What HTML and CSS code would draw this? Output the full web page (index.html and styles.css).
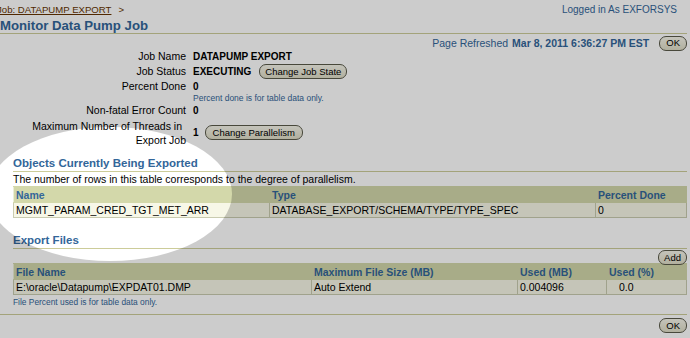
FILE: index.html
```html
<!DOCTYPE html>
<html lang="en">
<head>
  <meta charset="UTF-8">
  <title>Monitor Data Pump Job</title>
  <link rel="stylesheet" href="styles.css">
</head>
<body>
  <div class="page">
    <!-- Top bar -->
    <div class="top-bar">
      <div class="breadcrumb"><a href="#">Job: DATAPUMP EXPORT</a><span class="crumb-sep">&gt;</span></div>
      <div class="login">Logged in As EXFORSYS</div>
    </div>
    <h1 class="page-title">Monitor Data Pump Job</h1>

    <div class="refresh-row">
      <span class="refresh-label">Page Refreshed</span>
      <span class="refresh-time">Mar 8, 2011 6:36:27 PM EST</span>
      <button class="btn">OK</button>
    </div>

    <!-- Job details -->
    <div class="details">
      <div class="label">Job Name</div>
      <div class="value">DATAPUMP EXPORT</div>

      <div class="label">Job Status</div>
      <div class="value">EXECUTING <button class="btn">Change Job State</button></div>

      <div class="label">Percent Done</div>
      <div class="value">0</div>

      <div class="label"></div>
      <div class="note">Percent done is for table data only.</div>

      <div class="label">Non-fatal Error Count</div>
      <div class="value">0</div>

      <div class="label label-wrap"><span class="wrap-line">Maximum Number of Threads in</span><br>Export Job</div>
      <div class="value value-mid">1 <button class="btn">Change Parallelism</button></div>
    </div>

    <!-- Objects section -->
    <div class="section">
      <h2 class="section-title">Objects Currently Being Exported</h2>
      <p class="section-text">The number of rows in this table corresponds to the degree of parallelism.</p>
      <table class="data-table">
        <colgroup>
          <col style="width: 256px">
          <col style="width: 326px">
          <col>
        </colgroup>
        <tr>
          <th>Name</th>
          <th>Type</th>
          <th>Percent Done</th>
        </tr>
        <tr>
          <td>MGMT_PARAM_CRED_TGT_MET_ARR</td>
          <td>DATABASE_EXPORT/SCHEMA/TYPE/TYPE_SPEC</td>
          <td>0</td>
        </tr>
      </table>
    </div>

    <!-- Export files section -->
    <div class="section">
      <h2 class="section-title">Export Files</h2>
      <div class="table-actions"><button class="btn">Add</button></div>
      <table class="data-table">
        <colgroup>
          <col style="width: 298px">
          <col style="width: 206px">
          <col style="width: 89px">
          <col>
        </colgroup>
        <tr>
          <th>File Name</th>
          <th>Maximum File Size (MB)</th>
          <th>Used (MB)</th>
          <th>Used (%)</th>
        </tr>
        <tr>
          <td>E:\oracle\Datapump\EXPDAT01.DMP</td>
          <td>Auto Extend</td>
          <td>0.004096</td>
          <td class="num">0.0</td>
        </tr>
      </table>
      <div class="note table-note">File Percent used is for table data only.</div>
    </div>

    <div class="footer">
      <button class="btn">OK</button>
    </div>
  </div>

  <!-- Spotlight highlight over the page -->
  <div class="spotlight"></div>
</body>
</html>
```

FILE: styles.css
```css
:root {
  --blaf-blue: #336699;
  --link-brown: #663300;
  --rule: #cccc99;
  --head-bg: #d3d8aa;
  --row-bg: #f7f7e7;
  --cell-border: #c9cbb0;
}

body {
  margin: 0;
  background: #ffffff;
  font-family: "Liberation Sans", Arial, sans-serif;
  font-size: 10.5px;
  color: #000;
  overflow: hidden;
  position: relative;
  height: 338px;
}

.page {
  margin-left: -2px;
  padding-right: 3px;
}

/* Top bar */
.top-bar {
  display: flex;
  justify-content: space-between;
  align-items: center;
  height: 16px;
  padding-top: 1px;
}

.breadcrumb {
  font-size: 9.6px;
  color: var(--link-brown);
  margin-left: -1px;
}

.breadcrumb a {
  color: var(--link-brown);
}

.crumb-sep {
  margin-left: 7px;
}

.login {
  color: var(--blaf-blue);
  font-size: 10px;
  padding-right: 10px;
}

.page-title {
  margin: 1px 0 0 2px;
  font-size: 13.2px;
  color: var(--blaf-blue);
  line-height: 15px;
  border-bottom: 1px solid var(--rule);
}

.refresh-row {
  display: flex;
  justify-content: flex-end;
  align-items: center;
  gap: 4px;
  height: 16px;
  margin-top: 1px;
  color: var(--blaf-blue);
}

.refresh-time {
  font-weight: bold;
  margin-right: 6px;
}

/* Buttons */
.btn {
  font-family: "Liberation Sans", Arial, sans-serif;
  font-size: 9.5px;
  line-height: 12px;
  height: 15px;
  padding: 0 5px;
  border: 1px solid #5a5a4a;
  border-radius: 7px;
  background: linear-gradient(#f6f5ea, #dedcc6);
  color: #000;
  vertical-align: middle;
  cursor: pointer;
}

.refresh-row .btn,
.footer .btn {
  padding: 0 6px;
}

/* Details */
.details {
  display: grid;
  grid-template-columns: 188px auto;
  column-gap: 7px;
  line-height: 15px;
  margin-top: -2px;
}

.label {
  text-align: right;
}

.label-wrap {
  line-height: 14px;
  margin-top: 1px;
}

.wrap-line {
  padding-right: 4px;
}

.value {
  font-size: 10px;
  font-weight: bold;
  display: flex;
  align-items: center;
  gap: 6px;
}

.value .btn {
  font-weight: normal;
  margin-left: 2px;
}

.value-mid {
  align-self: center;
  gap: 4px;
}

.value-mid .btn {
  padding: 0 7px;
}

.note {
  font-size: 8.5px;
  color: var(--blaf-blue);
  line-height: 9px;
}

/* Sections */
.section {
  margin-left: 15px;
}

.section-title {
  margin: 0;
  font-size: 11.5px;
  color: var(--blaf-blue);
  line-height: 16px;
  border-bottom: 1px solid var(--rule);
}

.details + .section {
  margin-top: 8px;
}

.section + .section {
  margin-top: 14px;
}

.section-text {
  margin: 1px 0 0;
  font-size: 10.5px;
  line-height: 13px;
}

.table-actions {
  display: flex;
  justify-content: flex-end;
  margin-top: 1px;
  height: 13px;
}

.data-table {
  width: 100%;
  border-collapse: collapse;
  font-size: 10.5px;
  table-layout: fixed;
}

.data-table th {
  background: var(--head-bg);
  color: var(--blaf-blue);
  text-align: left;
  font-weight: bold;
  height: 15px;
  padding: 0 2px;
  border: 1px solid var(--head-bg);
  border-left-color: #ecefd8;
}

.data-table td {
  background: var(--row-bg);
  height: 14px;
  padding: 0 2px;
  border: 1px solid var(--cell-border);
}

.data-table td.num {
  padding-left: 12px;
}

.table-note {
  margin-top: 3px;
  font-size: 8.4px;
}

.footer {
  display: flex;
  justify-content: flex-end;
  border-top: 1px solid var(--rule);
  margin-top: 7px;
  padding-top: 3px;
  margin-left: 2px;
}

/* Spotlight: dims everything except an ellipse */
.spotlight {
  position: absolute;
  left: -12px;
  top: 127px;
  width: 244px;
  height: 134px;
  border-radius: 50%;
  box-shadow: 0 0 3px 2000px rgba(0, 0, 0, 0.2);
  pointer-events: none;
}
```
